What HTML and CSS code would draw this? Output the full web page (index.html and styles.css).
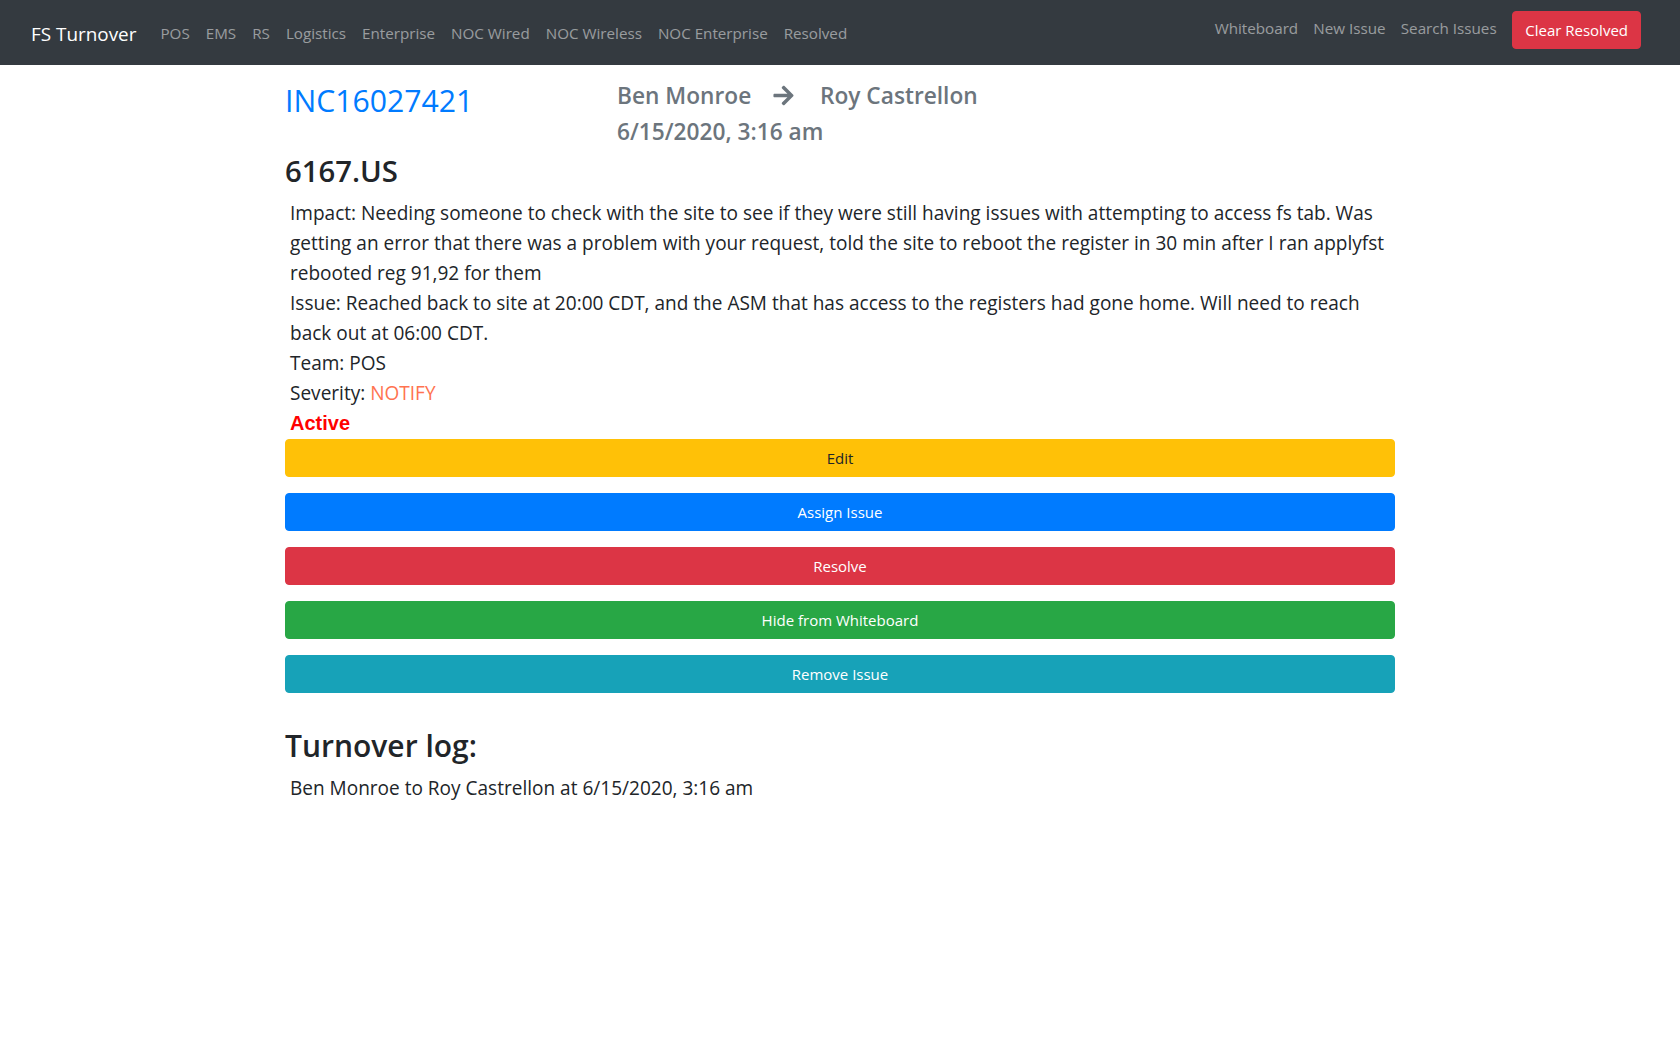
FILE: index.html
```html
<!DOCTYPE html>
<html lang="en">
<head>
<meta charset="utf-8">
<title>FS Turnover</title>
<link rel="stylesheet" href="styles.css">
</head>
<body>
<nav class="navbar">
  <div class="nav-inner">
    <div class="nav-left">
      <a class="brand" href="#">FS Turnover</a>
      <a class="nav-link" href="#">POS</a>
      <a class="nav-link" href="#">EMS</a>
      <a class="nav-link" href="#">RS</a>
      <a class="nav-link" href="#">Logistics</a>
      <a class="nav-link" href="#">Enterprise</a>
      <a class="nav-link" href="#">NOC Wired</a>
      <a class="nav-link" href="#">NOC Wireless</a>
      <a class="nav-link" href="#">NOC Enterprise</a>
      <a class="nav-link" href="#">Resolved</a>
    </div>
    <div class="nav-right">
      <a class="nav-link" href="#">Whiteboard</a>
      <a class="nav-link" href="#">New Issue</a>
      <a class="nav-link" href="#">Search Issues</a>
      <button class="btn-clear" type="button">Clear Resolved</button>
    </div>
  </div>
</nav>

<main class="container">
  <div class="head-row">
    <h2 class="inc">INC16027421</h2>
    <div class="handoff">
      <h4 class="handoff-line handoff-names">Ben Monroe
        <svg class="arrow" viewBox="0 0 448 512" aria-hidden="true"><path fill="currentColor" d="M190.5 66.9l22.2-22.2c9.4-9.4 24.6-9.4 33.9 0L441 239c9.4 9.4 9.4 24.6 0 33.9L246.6 467.3c-9.4 9.4-24.6 9.4-33.9 0l-22.2-22.2c-9.5-9.5-9.3-25 .4-34.3L311.4 296H24c-13.3 0-24-10.7-24-24v-32c0-13.3 10.7-24 24-24h287.4L190.9 101.2c-9.8-9.3-10-24.8-.4-34.3z"/></svg>
        Roy Castrellon</h4>
      <h4 class="handoff-line">6/15/2020, 3:16 am</h4>
    </div>
  </div>

  <h3 class="site">6167.US</h3>

  <div class="details">
    <div>Impact: Needing someone to check with the site to see if they were still having issues with attempting to access fs tab. Was getting an error that there was a problem with your request, told the site to reboot the register in 30 min after I ran applyfst rebooted reg 91,92 for them</div>
    <div>Issue: Reached back to site at 20:00 CDT, and the ASM that has access to the registers had gone home. Will need to reach back out at 06:00 CDT.</div>
    <div>Team: POS</div>
    <div>Severity: <span class="sev-notify">NOTIFY</span></div>
    <div class="status-active">Active</div>
  </div>

  <div class="actions">
    <button class="btn btn-warning" type="button">Edit</button>
    <button class="btn btn-primary" type="button">Assign Issue</button>
    <button class="btn btn-danger" type="button">Resolve</button>
    <button class="btn btn-success" type="button">Hide from Whiteboard</button>
    <button class="btn btn-info" type="button">Remove Issue</button>
  </div>

  <h2 class="log-title">Turnover log:</h2>
  <div class="log-entry">Ben Monroe to Roy Castrellon at 6/15/2020, 3:16 am</div>
</main>
</body>
</html>
```

FILE: styles.css
```css
* { box-sizing: border-box; }

html, body {
  margin: 0;
  padding: 0;
  background: #fff;
  color: #212529;
  font-family: "Open Sans", "Noto Sans", sans-serif;
}

a { text-decoration: none; }

/* navbar */
.navbar {
  background: #343a40;
  height: 65px;
  padding: 8px 16px;
}

.nav-inner {
  height: 49px;
  padding: 0 15px;
  display: flex;
  justify-content: space-between;
  align-items: center;
}

.nav-left {
  display: flex;
  align-items: center;
}

.brand {
  color: #fff;
  font-size: 18.9px;
  line-height: 30px;
  padding: 5px 0;
  margin-right: 16px;
  margin-top: 2px;
}

.nav-link {
  color: rgba(255, 255, 255, 0.5);
  font-size: 15.2px;
  line-height: 24px;
  padding: 8px;
}

.nav-right {
  display: flex;
  align-items: flex-start;
  align-self: stretch;
}

.nav-right .nav-link {
  padding: 8px 7.6px 8px;
}

.btn-clear {
  margin-top: 3px;
  margin-left: 8px;
  margin-right: 8px;
  height: 38px;
  padding: 6px 12px;
  border: 1px solid #dc3545;
  border-radius: 4px;
  background: #dc3545;
  color: #fff;
  font-family: inherit;
  font-size: 15px;
  line-height: 24px;
}

/* content */
.container {
  width: 1110px;
  margin: 0 auto;
  padding-top: 16px;
}

.head-row {
  display: grid;
  grid-template-columns: 332px 1fr;
}

.inc {
  margin: 1px 0 0;
  font-size: 30.2px;
  font-weight: 400;
  line-height: 38.4px;
  color: #007bff;
}

.handoff {
  padding-top: 1px;
}

.handoff-line {
  margin: 0 0 6px;
  font-size: 22.7px;
  font-weight: 600;
  line-height: 28.8px;
  color: #6c757d;
}

.handoff-names {
  margin-bottom: 7.5px;
}

.arrow {
  width: 21px;
  height: 23px;
  vertical-align: -3px;
  margin: 0 20px 0 16px;
}

.site {
  margin: 0 0 8.5px;
  font-size: 29.3px;
  font-weight: 600;
  line-height: 36px;
}

.details {
  padding-left: 5px;
  font-size: 19.05px;
  line-height: 30px;
}

.sev-notify {
  color: #ff7350;
}

.status-active {
  color: #ff0000;
  font-family: "Liberation Sans", Arial, sans-serif;
  font-weight: 700;
  font-size: 20px;
}

.actions {
  display: flex;
  flex-direction: column;
  gap: 16px;
  margin-top: 1px;
}

.btn {
  display: block;
  width: 100%;
  height: 38px;
  padding: 6px 12px;
  border: 1px solid transparent;
  border-radius: 4px;
  font-family: inherit;
  font-size: 15px;
  line-height: 24px;
  text-align: center;
  color: #fff;
}

.btn-warning { background: #ffc107; border-color: #ffc107; color: #212529; }
.btn-primary { background: #007bff; border-color: #007bff; }
.btn-danger  { background: #dc3545; border-color: #dc3545; }
.btn-success { background: #28a745; border-color: #28a745; }
.btn-info    { background: #17a2b8; border-color: #17a2b8; }

.log-title {
  margin: 34px 0 8px;
  font-size: 30px;
  font-weight: 600;
  line-height: 38.4px;
}

.log-entry {
  padding-left: 5px;
  font-size: 19.05px;
  line-height: 30px;
}
```
